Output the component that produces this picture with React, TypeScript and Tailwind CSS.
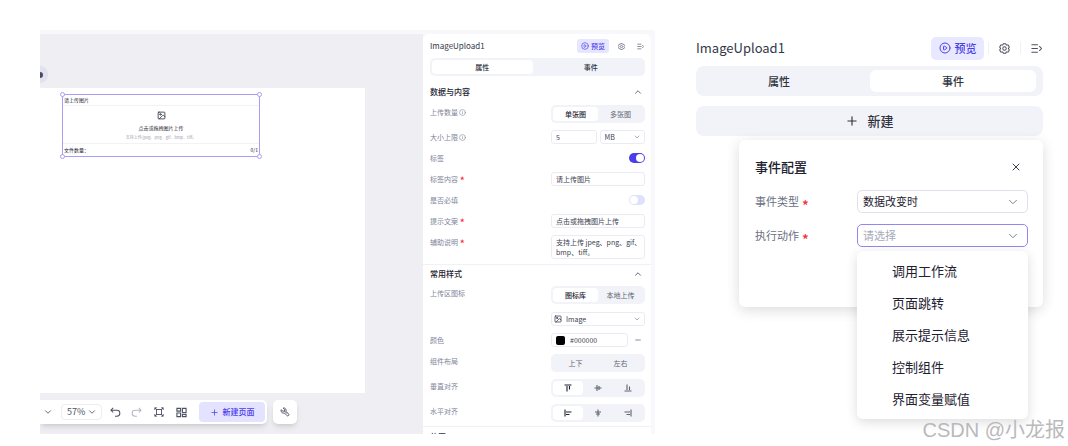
import { useState, type ReactNode } from 'react'
import { ChevronDown, ChevronUp, CirclePlay, Image as ImageIcon, Info, Minus, Plus, X } from 'lucide-react'
import clsx from 'clsx'

type Tab = 'props' | 'events'

const ACTIONS = ['调用工作流', '页面跳转', '展示提示信息', '控制组件', '界面变量赋值']

function GearIcon({ className }: { className?: string }) {
  return (
    <svg viewBox="0 0 24 24" fill="none" stroke="currentColor" strokeWidth="2.200" strokeLinejoin="round" className={className} aria-hidden="true">
      <path d="M9.500 1.500h5l1.500 3 4-.2 2.500 4.200L20.500 12l2 3.500-2.500 4.200-4-.2-1.500 3h-5l-1.500-3-4 .2-2.500-4.200 2-3.500-2-3.500L4 4.300l4 .2z" />
      <circle cx="12" cy="12" r="3.800" />
    </svg>
  )
}

function CollapseIcon({ className }: { className?: string }) {
  return (
    <svg viewBox="0 0 24 24" fill="none" stroke="currentColor" strokeWidth="2.200" className={className} aria-hidden="true">
      <path d="M1 4h14M1 12h14M1 20h14M18 7l5 5-5 5" />
    </svg>
  )
}

function UndoIcon({ className }: { className?: string }) {
  return (
    <svg viewBox="0 0 24 24" fill="none" stroke="currentColor" strokeWidth="2.200" className={className} aria-hidden="true">
      <path d="M7 2 2 7l5 5M2 7h13a6.500 6.500 0 0 1 0 13h-4" />
    </svg>
  )
}

function FitIcon({ className }: { className?: string }) {
  return (
    <svg viewBox="0 0 24 24" fill="none" stroke="currentColor" strokeWidth="2.200" className={className} aria-hidden="true">
      <path d="M2 7V2h5M17 2h5v5M22 17v5h-5M7 22H2v-5M2 2l5 5M22 2l-5 5M22 22l-5-5M2 22l5-5" />
      <rect x="6" y="6" width="12" height="12" />
    </svg>
  )
}

function BlocksIcon({ className }: { className?: string }) {
  return (
    <svg viewBox="0 0 24 24" fill="none" stroke="currentColor" strokeWidth="2.400" className={className} aria-hidden="true">
      <path d="M2 3h8v6H2zM14 3h8v9h-8zM2 13h8v8H2zM14 16h8v5h-8z" />
    </svg>
  )
}

function WrenchIcon({ className }: { className?: string }) {
  return (
    <svg viewBox="0 0 24 24" fill="none" stroke="currentColor" strokeWidth="2.200" strokeLinejoin="round" className={className} aria-hidden="true">
      <path d="M7.500 2.300 11 6v4H7L2.800 6.500a6.200 6.200 0 0 0 7.700 8l6 6a2.800 2.800 0 0 0 4-4l-6-6a6.200 6.200 0 0 0-7-8.200z" />
      <path d="m11 10 6 6" />
    </svg>
  )
}

// bars hang from a guide line; rotate for the other directions
function AlignEdgeIcon({ className }: { className?: string }) {
  return (
    <svg viewBox="0 0 16 16" fill="none" stroke="currentColor" strokeWidth="2.200" className={className} aria-hidden="true">
      <path d="M1 2h14M6 4v11M11 4v7" />
    </svg>
  )
}

function AlignMiddleIcon({ className }: { className?: string }) {
  return (
    <svg viewBox="0 0 16 16" fill="none" stroke="currentColor" strokeWidth="2.200" className={className} aria-hidden="true">
      <path d="M1 8h14M6 2v12M10 4v8" />
    </svg>
  )
}

function Tabs({ value, onChange, large }: { value: Tab; onChange: (t: Tab) => void; large?: boolean }) {
  const items: [Tab, string][] = [['props', '属性'], ['events', '事件']]
  return (
    <div
      role="tablist"
      className={clsx('flex gap-2 bg-[#f2f3f8]', large ? 'h-[30px] rounded-lg py-1 pr-[7px] text-[11px]' : 'h-[18px] rounded-[5px] py-0.5 pr-1 pl-0.5 text-[7px]')}
    >
      {items.map(([id, label]) => (
        <button
          key={id}
          role="tab"
          aria-selected={value === id}
          onClick={() => onChange(id)}
          className={clsx('flex-1 font-medium text-[#2f3442]', large ? 'rounded-md' : 'rounded', value === id && 'bg-white')}
        >
          {label}
        </button>
      ))}
    </div>
  )
}

function Segmented({ label, options, selected }: { label: string; options: ReactNode[]; selected?: number }) {
  const [value, setValue] = useState(selected ?? -1)
  return (
    <div role="group" aria-label={label} className="flex h-[18px] rounded-[5px] bg-[#f2f3f8] p-0.5 text-[7px] text-[#5d6272]">
      {options.map((o, i) => (
        <button
          key={i}
          aria-pressed={value === i}
          onClick={() => setValue(i)}
          className={clsx('flex flex-1 items-center justify-center rounded', value === i && 'bg-white font-medium text-[#1d2130]')}
        >
          {o}
        </button>
      ))}
    </div>
  )
}

function Row({ label, id, required, info, children }: { label?: string; id?: string; required?: boolean; info?: boolean; children: ReactNode }) {
  return (
    <div className="flex items-start justify-between">
      <label htmlFor={id} className="flex h-3.5 items-center text-[7px] text-[#80859a]">
        {label}
        {required && <span className="mt-1 ml-0.5 text-[9px] leading-3 font-bold text-red-500">*</span>}
        {info && <Info className="ml-px size-[7px]" />}
      </label>
      <div className="w-[94px]">{children}</div>
    </div>
  )
}

function Switch({ id, defaultChecked }: { id: string; defaultChecked?: boolean }) {
  return (
    <span className="flex h-3.5 items-center justify-end">
      <input
        id={id}
        type="checkbox"
        role="switch"
        defaultChecked={defaultChecked}
        className="h-2.5 w-4 appearance-none rounded-full bg-[#dfe1fb] p-px before:block before:size-2 before:rounded-full before:bg-white checked:bg-[#4d3fe8] checked:before:ml-1.5"
      />
    </span>
  )
}

function SectionTitle({ children }: { children: ReactNode }) {
  return (
    <h2 className="flex h-4 items-center justify-between text-[8px] font-medium text-[#1d2130]">
      {children}
      <button aria-label="收起" className="mr-0.5"><ChevronUp className="size-2.5 text-[#4c5161]" /></button>
    </h2>
  )
}

const FIELD = 'block h-3.5 w-full min-w-0 rounded-[3px] border border-[#ebecf3] bg-white px-1 text-[7px] leading-3 text-[#3c4150] appearance-none outline-none'

function PropertyPanel() {
  const [tab, setTab] = useState<Tab>('props')
  return (
    <aside className="w-[228px] shrink-0 overflow-hidden rounded-t-md bg-white">
      <div className="pr-1.5 pl-[7px]">
        <header className="flex h-6 items-center">
          <h1 className="flex-1 text-[8px] text-[#333847]">ImageUpload1</h1>
          <button className="flex h-3.5 w-8 items-center justify-center gap-0.5 rounded-[3px] bg-[#e6e6ff] text-[7px] font-medium text-[#4d3fe8]">
            <CirclePlay className="size-2" />
            预览
          </button>
          <button aria-label="设置" className="ml-[9px] text-[#4c5161]"><GearIcon className="size-[7px]" /></button>
          <button aria-label="收起面板" className="mr-px ml-3 text-[#4c5161]"><CollapseIcon className="size-[7px]" /></button>
        </header>
        <Tabs value={tab} onChange={setTab} />
        <div className="mt-2">
          <SectionTitle>数据与内容</SectionTitle>
        </div>
        <div className="mt-[5px] flex flex-col gap-[7px]">
          <Row label="上传数量" info><Segmented label="上传数量" options={['单张图', '多张图']} selected={0} /></Row>
          <Row label="大小上限" info id="size">
            <div className="grid grid-cols-2 gap-[3px]">
              <input id="size" defaultValue="5" className={FIELD} />
              <div className="relative">
                <select aria-label="单位" className={FIELD}>
                  <option>MB</option>
                  <option>KB</option>
                </select>
                <ChevronDown className="pointer-events-none absolute top-[3px] right-1 size-2 text-[#80859a]" />
              </div>
            </div>
          </Row>
          <Row label="标签" id="tag"><Switch id="tag" defaultChecked /></Row>
          <Row label="标签内容" id="tag-text" required><input id="tag-text" defaultValue="请上传图片" className={FIELD} /></Row>
          <Row label="是否必填" id="must"><Switch id="must" /></Row>
          <Row label="提示文案" id="hint" required><input id="hint" defaultValue="点击或拖拽图片上传" className={FIELD} /></Row>
          <Row label="辅助说明" id="help" required>
            <textarea id="help" defaultValue="支持上传 jpeg、png、gif、bmp、tiff。" className="block h-6 w-full resize-none overflow-hidden rounded-[3px] border border-[#ebecf3] py-px pl-1 text-[7px] leading-[10px] text-[#3c4150] outline-none" />
          </Row>
        </div>
      </div>
      <hr className="mt-[5px] border-[#f0f0f6]" />
      <div className="pt-px pr-1.5 pl-[7px]">
        <SectionTitle>常用样式</SectionTitle>
        <div className="mt-1 flex flex-col gap-[7px]">
          <Row label="上传区图标"><Segmented label="上传区图标" options={['图标库', '本地上传']} selected={0} /></Row>
          <Row>
            <div className="relative mt-px">
              <select aria-label="图标" className={clsx(FIELD, 'pl-3.5')}>
                <option>Image</option>
              </select>
              <ImageIcon className="pointer-events-none absolute top-[3px] left-[3px] size-2 text-[#1d2130]" />
              <ChevronDown className="pointer-events-none absolute top-[3px] right-1 size-2 text-[#80859a]" />
            </div>
          </Row>
          <Row label="颜色" id="color">
            <div className="flex items-center">
              <div className="flex h-3.5 w-[77px] items-center gap-[5px] rounded-[3px] border border-[#ebecf3] pl-1">
                <span className="size-[9px] shrink-0 rounded-[2px] bg-black" />
                <input id="color" defaultValue="#000000" className="w-full min-w-0 text-[7px] leading-3 text-[#3c4150] outline-none" />
              </div>
              <button aria-label="移除" className="ml-1.5 text-[#4c5161]"><Minus className="size-2" /></button>
            </div>
          </Row>
          <Row label="组件布局"><Segmented label="组件布局" options={['上下', '左右']} /></Row>
          <Row label="垂直对齐">
            <Segmented
              label="垂直对齐"
              selected={0}
              options={[
                <AlignEdgeIcon className="size-2" />,
                <AlignMiddleIcon className="size-2" />,
                <AlignEdgeIcon className="size-2 rotate-180 -scale-x-100" />,
              ]}
            />
          </Row>
          <Row label="水平对齐">
            <Segmented
              label="水平对齐"
              selected={0}
              options={[
                <AlignEdgeIcon className="size-2 -rotate-90 -scale-x-100" />,
                <AlignMiddleIcon className="size-2 rotate-90" />,
                <AlignEdgeIcon className="size-2 rotate-90" />,
              ]}
            />
          </Row>
        </div>
      </div>
      <hr className="mt-1 border-[#f0f0f6]" />
      <div className="pt-0.5 pr-1.5 pl-[7px]">
        <SectionTitle>位置</SectionTitle>
      </div>
    </aside>
  )
}

const HANDLES = ['-top-[3px] -left-[3px]', '-top-[3px] -right-[3px]', '-bottom-[3px] -left-[3px]', '-bottom-[3px] -right-[3px]']

function UploadWidget() {
  return (
    <div className="absolute top-1.5 left-[22px] flex h-[63px] w-[198px] flex-col border border-[#a79ff5] text-[5px] text-[#1d2130]">
      <div className="h-2.5 px-px leading-[10px]">请上传图片</div>
      <div className="flex flex-1 flex-col items-center border-y border-[#f1f1f6] pt-[5px]">
        <ImageIcon className="size-[9px]" />
        <div className="mt-1 leading-2">点击或拖拽图片上传</div>
        <div className="mt-px text-[4px] leading-2 text-[#9a9eae]">支持上传 jpeg、png、gif、bmp、tiff。</div>
      </div>
      <div className="flex h-3 justify-between px-px leading-[11px]">
        <span>文件数量：</span>
        <span>0/1</span>
      </div>
      {HANDLES.map(pos => (
        <i key={pos} className={clsx('absolute size-[5px] rounded-full border border-[#a79ff5] bg-white', pos)} />
      ))}
    </div>
  )
}

function Toolbar() {
  return (
    <div className="absolute bottom-2.5 left-0 flex gap-1.5 text-[#4c5161]">
      <div className="flex h-6 items-center rounded-r-[5px] bg-white pr-0.5 pl-[3px] shadow-md">
        <button aria-label="更多"><ChevronDown className="size-2.5" /></button>
        <div className="relative ml-2">
          <select aria-label="缩放" defaultValue="57%" className="block h-4 w-[41px] appearance-none rounded border border-[#ececf2] pl-[5px] text-[9px] leading-3.5 outline-none">
            <option>57%</option>
            <option>100%</option>
          </select>
          <ChevronDown className="pointer-events-none absolute top-[3px] right-[5px] size-2.5" />
        </div>
        <button aria-label="撤销" className="ml-2"><UndoIcon className="size-[11px]" /></button>
        <button aria-label="重做" className="ml-2.5 text-[#b6b9c4]"><UndoIcon className="size-[11px] -scale-x-100" /></button>
        <button aria-label="适应画布" className="ml-3"><FitIcon className="size-[10px]" /></button>
        <button aria-label="组件" className="ml-3"><BlocksIcon className="size-[11px]" /></button>
        <button className="ml-3 flex h-5 w-[66px] items-center justify-center gap-1 rounded bg-[#e3e2ff] text-[8px] font-medium text-[#4d3fe8]">
          <Plus className="size-[9px]" />
          新建页面
        </button>
      </div>
      <button aria-label="工具" className="flex size-6 items-center justify-center rounded-[5px] bg-white shadow-md">
        <WrenchIcon className="size-[10px]" />
      </button>
    </div>
  )
}

function Editor() {
  return (
    <section className="flex min-w-0 flex-1 overflow-hidden bg-[#f7f7fc] pt-1 pr-1">
      <div className="relative flex min-w-0 flex-1 flex-col overflow-hidden bg-[#eeeef3] pt-[54px] pr-[58px] pb-[41px]">
        <div className="absolute top-8 left-0 flex h-[17px] w-2 items-center rounded-r-lg bg-[#e2e2ee]">
          <span className="h-1.5 w-[3px] rounded-r-full bg-[#4b4966]" />
        </div>
        <div className="relative flex-1 bg-white">
          <UploadWidget />
        </div>
        <Toolbar />
      </div>
      <PropertyPanel />
    </section>
  )
}

function FormSelect({ id, label, options, open }: { id: string; label: string; options: string[]; open?: boolean }) {
  return (
    <div className="flex h-[23px] items-center">
      <label htmlFor={id} className="flex flex-1 items-center text-[11px] text-[#6b7082]">
        {label}
        <span className="mt-1.5 ml-[3px] text-[14px] leading-4 font-medium text-red-500">*</span>
      </label>
      <div className="relative w-[171px]">
        <select
          id={id}
          className={clsx(
            'block h-[23px] w-full appearance-none rounded-[5px] border bg-white pl-[5px] text-[11px] outline-none',
            open ? 'border-[#9187f0] text-[#a6a9b8]' : 'border-[#dfe0ea] text-[#1d2130]',
          )}
        >
          {options.map(o => <option key={o}>{o}</option>)}
        </select>
        <ChevronDown className="pointer-events-none absolute top-[5px] right-2 size-3.5 stroke-[1.5] text-[#6b7082]" />
        {open && (
          <ul role="listbox" aria-label={label} className="absolute top-[27px] left-0 w-full rounded-md bg-white py-1 shadow-[0_3px_12px_rgba(0,0,0,0.14)]">
            {ACTIONS.map(a => (
              <li key={a} role="option" aria-selected={false} className="h-8 pl-[35px] text-[13px] leading-8 text-[#1d2130]">{a}</li>
            ))}
          </ul>
        )}
      </div>
    </div>
  )
}

function EventPanel() {
  const [tab, setTab] = useState<Tab>('events')
  return (
    <section className="w-[347px] shrink-0">
      <header className="flex h-9 items-center">
        <h1 className="flex-1 text-[13px] text-[#333847]">ImageUpload1</h1>
        <button className="flex h-[23px] w-[53px] items-center justify-center gap-1 rounded-[5px] bg-[#e8e8ff] text-[11px] font-medium text-[#4d3fe8]">
          <CirclePlay className="size-3" />
          预览
        </button>
        <span className="ml-1 h-3 w-px bg-[#f0f0f5]" />
        <button aria-label="设置" className="ml-2.5 text-[#4c5161]"><GearIcon className="size-[11px]" /></button>
        <span className="ml-2.5 h-3 w-px bg-[#f0f0f5]" />
        <button aria-label="收起面板" className="mr-px ml-2.5 text-[#4c5161]"><CollapseIcon className="size-[11px]" /></button>
      </header>
      <Tabs value={tab} onChange={setTab} large />
      <div className="relative mt-2.5">
        <button className="flex h-[30px] w-full items-center justify-center gap-2 rounded-lg bg-[#f2f3f8] text-[13px] font-medium text-[#2f3442]">
          <Plus className="size-3.5" />
          新建
        </button>
        <div role="dialog" aria-labelledby="event-title" className="absolute top-[34px] right-0 h-[167px] w-[304px] rounded-md bg-white pt-[15px] pr-[15px] pl-4 shadow-[0_3px_14px_rgba(0,0,0,0.14)]">
          <div className="flex h-6 items-center justify-between">
            <h2 id="event-title" className="text-[13px] font-medium text-[#1d2130]">事件配置</h2>
            <button aria-label="关闭" className="mr-1.5 text-[#3c4150]"><X className="size-3" /></button>
          </div>
          <div className="mt-[11px] flex flex-col gap-[11px]">
            <FormSelect id="event-type" label="事件类型" options={['数据改变时']} />
            <FormSelect id="event-action" label="执行动作" options={['请选择', ...ACTIONS]} open />
          </div>
        </div>
      </div>
    </section>
  )
}

export default function App() {
  return (
    <div className="relative flex h-screen gap-[41px] overflow-hidden bg-white pt-[30px] pr-[25px] pb-3 pl-10 font-['Noto_Sans_CJK_SC','Noto_Sans',sans-serif]">
      <Editor />
      <EventPanel />
      <div className="absolute right-[3px] bottom-1 font-['Liberation_Sans','Noto_Sans_CJK_SC',sans-serif] text-[20px] leading-6 text-[#b9b9bc]">
        CSDN @小龙报
      </div>
    </div>
  )
}
